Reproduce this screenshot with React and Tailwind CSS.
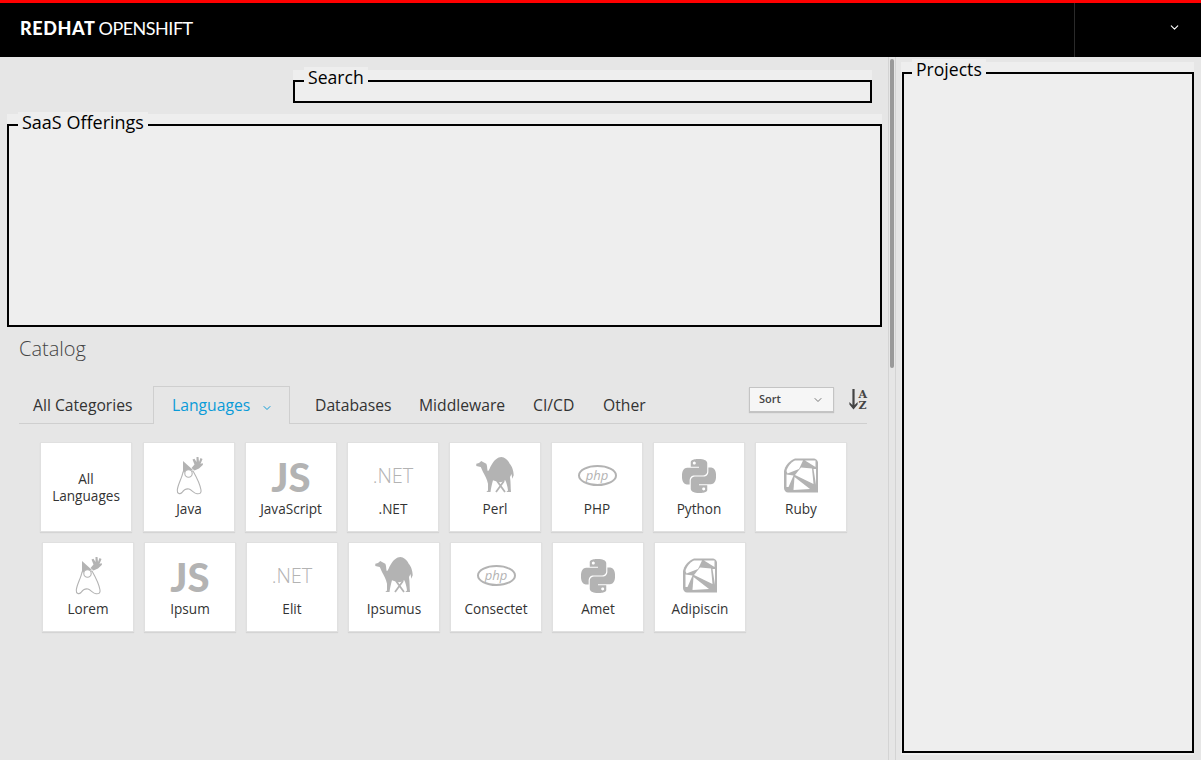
import React from "react";
import { ChevronDown } from "lucide-react";
import { SiPython } from "react-icons/si";

const DukeIcon = () => (
  <svg width="28" height="38" viewBox="0 -1 28 38" fill="none" stroke="#b3b3b3" strokeWidth="1.1">
    <path d="M8 14 C7 20 3 26 2.3 32 C2 36 5 36.5 7 34.5 C9 31.5 11 30.5 14 31 C17 32 19 35.5 22 35.7 C25 36 26.5 35 26 32 C25 26 22 20 18 13 Z" fill="#fff" />
    <path d="M8 3 L8 14 L18 12 Z" fill="#b3b3b3" stroke="none" />
    <circle cx="13.5" cy="15.5" r="3.7" fill="#fff" />
    <path
      d="M16.5 10 L19.5 6.5 L17.5 1.5 L19.5 0.8 L21.5 4 L21.5 -1 L23.5 -1 L24 4 L25.5 0 L27.5 1 L25.5 6 L27.5 5 L28 6.8 L24 10.5 L19.5 12.5 Z"
      fill="#b3b3b3"
      stroke="none"
    />
  </svg>
);

const CamelIcon = () => (
  <svg width="40" height="37" viewBox="0 0 40 37" fill="#b3b3b3">
    <path d="M1.3 6.7 L4 6 L6.3 4 L8 5 L11.3 6.7 C12.5 9 12 13 13 14.3 C14.5 13 15 10 16.3 8.3 C19 3 23 0 26.3 0 C29.5 0 33 3 34.7 6.7 C37 9 38.7 14 38.7 18.3 L37.3 21.7 L36.5 17 L35 20 C35.8 25 35.5 31 36 35 L31.3 35 L33 33.5 C32.5 29 31.5 26 30.3 23.3 C28 25 25.5 25.5 23 25 L18 23.3 C17 27 16 31 15.5 35 L11.3 35 L13 33.5 L13 26.7 C12 22 10 19 8 15 C7 13 6.5 11 5.7 10 L1.3 9 Z" />
    <path d="M22 24 L30 35 M29 24 L21 35" stroke="#b3b3b3" strokeWidth="1.8" fill="none" />
  </svg>
);

const PhpIcon = () => (
  <div className="flex h-[21px] w-[39px] items-center justify-center rounded-[50%] border-[2.5px] border-[#b3b3b3]">
    <span className="text-[13px] leading-none text-[#b3b3b3] italic">php</span>
  </div>
);

const RubyIcon = () => (
  <svg width="34" height="35" viewBox="0 0 34 35">
    <path d="M11 0.5 L29 0.5 C32 0.5 34 2.5 34 5 L34 34.5 L4 34.5 C2 34.5 0 32.5 0 30 L0 13 C1 8 5 3 11 0.5 Z" fill="#b3b3b3" />
    <path d="M2.5 13 C3.5 8.5 7 4.5 11 2.5 L19 2.5 L15 11 L3.5 15.5 Z" fill="#fff" />
    <path d="M21 2.5 L31.5 2.5 L31.5 9 Z" fill="#fff" />
    <path d="M17 9.5 L28 10.5 L29.5 26 L11 17 Z" fill="#fff" />
    <path d="M29.5 11 L32 11 L32 27 Z" fill="#fff" />
    <path d="M10.5 19 L26 31 L9.5 32 Z" fill="#fff" />
    <path d="M2.5 16.5 L9.5 17.5 L4.5 29 L2.5 29 Z" fill="#fff" />
  </svg>
);

const row1 = [
  { label: "Java", icon: <DukeIcon /> },
  { label: "JavaScript", icon: <span className="pt-[3px] font-['Lato',sans-serif] text-[40px] leading-none font-black text-[#b3b3b3]">JS</span> },
  { label: ".NET", icon: <span className="text-[20px] leading-none font-light text-[#b3b3b3]">.NET</span> },
  { label: "Perl", icon: <CamelIcon /> },
  { label: "PHP", icon: <PhpIcon /> },
  { label: "Python", icon: <SiPython size={34} color="#b3b3b3" /> },
  { label: "Ruby", icon: <RubyIcon /> },
];

const row2 = ["Lorem", "Ipsum", "Elit", "Ipsumus", "Consectet", "Amet", "Adipiscin"];

const Tile = ({ label, icon }) => (
  <div className="flex h-[90px] w-[92px] flex-col items-center border border-[#e0e0e0] bg-white shadow-[0_1px_1px_rgba(0,0,0,0.08)]">
    <div className="flex h-[57px] w-full items-center justify-center pt-[8px]">{icon}</div>
    <div className="text-[13.6px] leading-[18px] text-[#333]">{label}</div>
  </div>
);

const App = () => {
  return (
    <div className="flex h-[760px] w-full flex-col overflow-hidden bg-[#e6e6e6] font-['Open_Sans',sans-serif]">
      <header className="flex h-[57px] shrink-0 items-stretch justify-between border-t-[3px] border-[#ff0000] bg-black">
        <div className="flex items-center pl-5 pb-[4px] font-['Lato',sans-serif] text-[18px] text-white">
          <span className="font-black tracking-[0.6px]">REDHAT</span>
          <span className="ml-[3px] font-normal tracking-[-0.5px]">OPENSHIFT</span>
        </div>
        <div className="flex w-[127px] items-center justify-end border-l border-[#2a2a2a] pr-[20px] pb-[5px]">
          <ChevronDown size={13} color="#fff" />
        </div>
      </header>

      <div className="flex min-h-0 flex-1">
        <main className="w-[888px] shrink-0">
          <div className="relative ml-[293px] mt-[13px] h-[33px] w-[579px] bg-[#eeeeee] pt-[10px]">
            <div className="h-[23px] border-2 border-black" />
            <span className="absolute left-[11px] top-[-3px] bg-[#eeeeee] px-1 text-[17.6px] leading-5 text-black">Search</span>
          </div>

          <div className="relative ml-[7px] mt-[11px] h-[213px] w-[875px] bg-[#eeeeee] pt-[10px]">
            <div className="h-[203px] border-2 border-black" />
            <span className="absolute left-[11px] top-[-2px] bg-[#eeeeee] px-1 text-[18px] leading-5 text-black">SaaS Offerings</span>
          </div>

          <h2 className="ml-[19px] mt-[8px] text-[20px] leading-[28px] font-light text-[#444]">Catalog</h2>

          <div className="ml-[19px] mt-[23px] flex h-[38px] w-[848px] items-stretch border-b border-[#cfcfcf] text-[15.7px] text-[#333]">
            <div className="ml-[14px] w-[100px] mr-[20px] pt-[8px]">All Categories</div>
            <div className="relative mb-[-1px] flex w-[137px] items-start gap-[11px] border border-b-0 border-[#cfcfcf] bg-[#e6e6e6] pl-[18px] pt-[7px] text-[#0a9bd8]">
              Languages
              <ChevronDown size={12} className="mt-[8px]" />
            </div>
            <div className="ml-[25px] w-[76px] pt-[8px]">Databases</div>
            <div className="ml-[28px] w-[86px] pt-[8px]">Middleware</div>
            <div className="ml-[28px] w-[42px] pt-[8px]">CI/CD</div>
            <div className="ml-[28px] pt-[8px]">Other</div>
            <div className="ml-auto mt-[1px] flex h-[25px] w-[85px] items-center justify-between border border-[#c4c4c4] bg-[#f6f6f6] px-[9px] text-[11px] font-semibold text-[#444] shadow-[0_1px_1px_rgba(0,0,0,0.15)]">
              Sort
              <ChevronDown size={12} color="#777" />
            </div>
            <div className="ml-[15px] mt-[3px] flex h-[22px] w-[18px] items-start justify-between">
              <svg width="9" height="21" viewBox="0 0 9 21" fill="#444">
                <path d="M3.4 0 H5.6 V16 L8.6 13 V15.5 L4.5 20.5 L0.4 15.5 V13 L3.4 16 Z" />
              </svg>
              <div className="font-['DejaVu_Serif',serif] text-[11px] leading-[11px] font-bold text-[#444]">
                <div>A</div>
                <div>Z</div>
              </div>
            </div>
          </div>

          <div className="ml-[40px] mt-[18px] flex gap-[10px]">
            <div className="mr-[1px] flex h-[90px] w-[92px] items-center justify-center border border-[#e0e0e0] bg-white text-center text-[13.6px] leading-[17px] text-[#333] shadow-[0_1px_1px_rgba(0,0,0,0.08)]">
              All
              <br />
              Languages
            </div>
            {row1.map((t) => (
              <Tile key={t.label} label={t.label} icon={t.icon} />
            ))}
          </div>
          <div className="ml-[42px] mt-[10px] flex gap-[10px]">
            {row2.map((label, i) => (
              <Tile key={label} label={label} icon={row1[i].icon} />
            ))}
          </div>
        </main>

        <div className="w-[8px] shrink-0 border-x border-[#d4d4d4] px-[1px] pt-[2px]">
          <div className="h-[309px] w-[4px] rounded-full bg-[#9a9a9a]" />
        </div>

        <aside className="flex-1 pl-[5px] pt-[5px]">
          <div className="relative h-[693px] w-[293px] bg-[#eeeeee] pt-[10px]">
            <div className="ml-[1px] h-[681px] w-[292px] border-2 border-black" />
            <span className="absolute left-[11px] top-[-3px] bg-[#eeeeee] px-1 text-[17.6px] leading-5 text-black">Projects</span>
          </div>
        </aside>
      </div>
    </div>
  );
};

export default App;
